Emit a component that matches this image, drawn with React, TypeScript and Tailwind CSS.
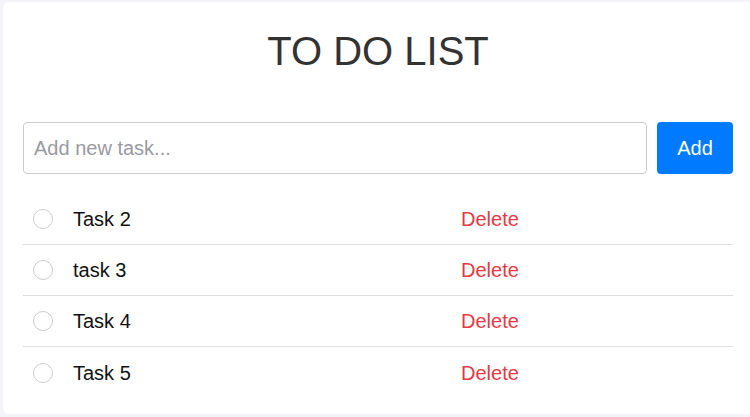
import React, { useState } from 'react'

interface Task {
  id: number
  text: string
  done: boolean
}

const initialTasks: Task[] = [
  { id: 2, text: 'Task 2', done: false },
  { id: 3, text: 'task 3', done: false },
  { id: 4, text: 'Task 4', done: false },
  { id: 5, text: 'Task 5', done: false }
]

const App: React.FC = () => {
  const [tasks, setTasks] = useState<Task[]>(initialTasks)
  const [newTask, setNewTask] = useState('')

  const addTask = () => {
    if (!newTask.trim()) return
    setTasks([...tasks, { id: Date.now(), text: newTask.trim(), done: false }])
    setNewTask('')
  }

  const toggleTask = (id: number) => {
    setTasks(tasks.map((t) => (t.id === id ? { ...t, done: !t.done } : t)))
  }

  const deleteTask = (id: number) => {
    setTasks(tasks.filter((t) => t.id !== id))
  }

  return (
    <div className="h-[417px] w-[750px] overflow-hidden bg-[#f4f4f8] pl-[3px] pt-[2px] font-['Liberation_Sans',Arial,sans-serif]">
      <div className="w-[750px] h-[412px] bg-white rounded-md px-5 pt-[26px]">
        {/* Title */}
        <h1 className="text-center text-[40px] leading-[46px] text-[#333] font-normal mb-[48px]">
          TO DO LIST
        </h1>

        {/* Input row */}
        <div className="flex gap-[10px] mb-5">
          <input
            type="text"
            value={newTask}
            onChange={(e) => setNewTask(e.target.value)}
            onKeyDown={(e) => e.key === 'Enter' && addTask()}
            placeholder="Add new task..."
            className="flex-1 h-[52px] border border-[#ccc] rounded px-[10px] text-[20px] text-[#333] placeholder:text-[#9a9aa2] outline-none"
          />
          <button
            onClick={addTask}
            className="w-[76px] h-[52px] bg-[#007bff] text-white text-[20px] rounded"
          >
            Add
          </button>
        </div>

        {/* Task list */}
        <ul>
          {tasks.map((task, i) => (
            <li
              key={task.id}
              className={`flex items-center h-[51px] px-[10px] ${
                i < tasks.length - 1 ? 'border-b border-[#ddd]' : ''
              }`}
            >
              <button
                onClick={() => toggleTask(task.id)}
                className={`w-5 h-5 rounded-full border border-[#ccc] shrink-0 ${
                  task.done ? 'bg-[#007bff] border-[#007bff]' : 'bg-white'
                }`}
              />
              <span
                className={`ml-5 w-[388px] text-[20px] text-[#111] ${
                  task.done ? 'line-through text-[#999]' : ''
                }`}
              >
                {task.text}
              </span>
              <button
                onClick={() => deleteTask(task.id)}
                className="text-[20px] text-[#e63946]"
              >
                Delete
              </button>
            </li>
          ))}
        </ul>
      </div>
    </div>
  )
}

export default App
